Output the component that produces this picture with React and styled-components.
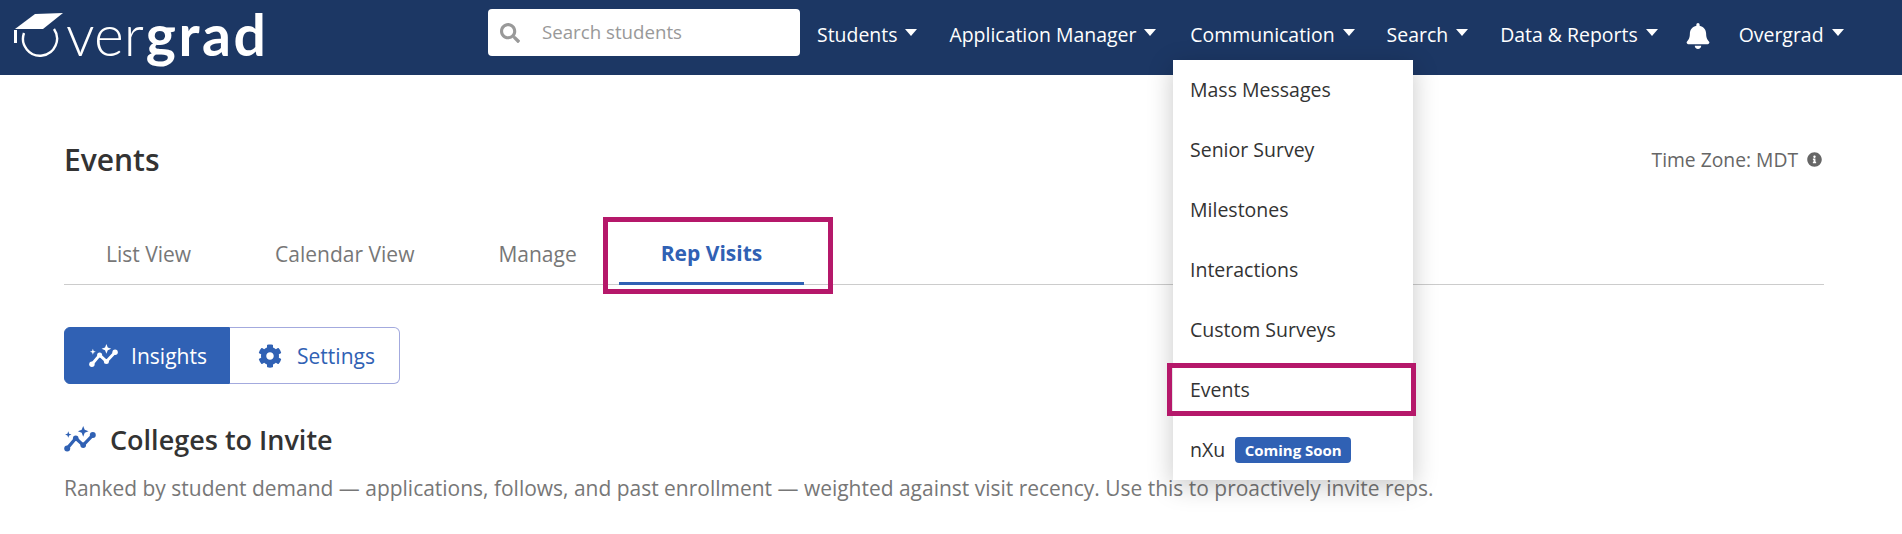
import React from "react";
import styled, { createGlobalStyle } from "styled-components";
import { FaSearch, FaBell, FaCog, FaInfoCircle } from "react-icons/fa";

const Global = createGlobalStyle`
  html, body { margin: 0; padding: 0; background: #fff; overflow: hidden; }
  body { font-family: "Open Sans", "Noto Sans", sans-serif; color: #333; }
  * { box-sizing: border-box; }
`;

const Page = styled.div`
  position: relative;
  width: 1902px;
  height: 534px;
  overflow: hidden;
`;

const NavBar = styled.header`
  height: 75px;
  background: #1c3764;
  display: flex;
  align-items: flex-start;
  padding-left: 14px;
`;

const Logo = styled.div`
  display: flex;
  align-items: flex-start;
  width: 474px;
  height: 75px;
  color: #fff;
`;

const LogoMark = styled.svg`
  width: 52px;
  height: 48px;
  margin-top: 10px;
  flex: none;
`;

const LogoWord = styled.div`
  font-family: "Lato", sans-serif;
  font-size: 57px;
  line-height: 64px;
  margin-top: 2px;
  white-space: nowrap;
  font-weight: 300;
  b { font-weight: 700; letter-spacing: 2.6px; margin-left: 2px; }
`;

const SearchBox = styled.div`
  width: 312px;
  height: 47px;
  margin-top: 9px;
  background: #fff;
  border-radius: 4px;
  display: flex;
  align-items: center;
  padding-left: 12px;
  color: #999;
  flex: none;
`;

const SearchText = styled.span`
  font-size: 18.7px;
  margin-left: 22px;
  margin-top: -2px;
  color: #999;
`;

const NavItems = styled.nav`
  display: flex;
  align-items: center;
  height: 68px;
  margin-left: 17px;
`;

const NavItem = styled.div`
  display: flex;
  align-items: center;
  color: #fff;
  font-size: 19.45px;
  white-space: nowrap;
  margin-right: ${(p) => p.$gap}px;
`;

const Caret = styled.span`
  width: 0;
  height: 0;
  margin-left: 8px;
  margin-top: -3px;
  border-left: 6px solid transparent;
  border-right: 6px solid transparent;
  border-top: 7px solid currentColor;
`;

const BellWrap = styled.div`
  display: flex;
  color: #fff;
  font-size: 26px;
  margin-right: 28px;
  margin-top: 4px;
`;

const Dropdown = styled.div`
  position: absolute;
  left: 1173px;
  top: 60px;
  width: 240px;
  height: 420px;
  background: #fff;
  box-shadow: 0 6px 24px rgba(0, 0, 0, 0.22);
  z-index: 5;
`;

const MenuItem = styled.div`
  position: relative;
  height: 60px;
  display: flex;
  align-items: center;
  padding: 0 0 1px 17px;
  font-size: 19.5px;
  color: #333;
`;

const Highlight = styled.span`
  position: absolute;
  border: 5px solid #b5186a;
  pointer-events: none;
  left: ${(p) => p.$l}px;
  top: ${(p) => p.$t}px;
  width: ${(p) => p.$w}px;
  height: ${(p) => p.$h}px;
`;

const Badge = styled.span`
  background: #3061b4;
  color: #fff;
  font-size: 15px;
  font-weight: 700;
  height: 26px;
  width: 116px;
  border-radius: 4px;
  margin-left: 10px;
  display: flex;
  align-items: center;
  justify-content: center;
`;

const Main = styled.main`
  padding: 0 78px 0 64px;
`;

const TitleRow = styled.div`
  display: flex;
  justify-content: space-between;
  align-items: center;
  height: 60px;
  margin-top: 54px;
`;

const Title = styled.h1`
  margin: 0;
  font-size: 30px;
  font-weight: 600;
  color: #333;
`;

const TimeZone = styled.div`
  display: flex;
  align-items: center;
  font-size: 19.3px;
  color: #666;
  margin-right: 2px;
  svg { font-size: 15px; margin-left: 9px; }
`;

const Tabs = styled.div`
  display: flex;
  margin-top: 28px;
  height: 68px;
  border-bottom: 1px solid #ccc;
`;

const Tab = styled.div`
  position: relative;
  height: 68px;
  padding: 6px 42px 0;
  display: flex;
  align-items: center;
  font-size: 21px;
  white-space: nowrap;
  color: ${(p) => (p.$active ? "#3061b4" : "#777")};
  font-weight: ${(p) => (p.$active ? 700 : 400)};
  border-bottom: ${(p) => (p.$active ? "3.5px solid #3061b4" : "none")};
`;

const ButtonGroup = styled.div`
  display: flex;
  margin-top: 42px;
  height: 57px;
`;

const ToggleButton = styled.div`
  height: 57px;
  width: ${(p) => p.$w}px;
  display: flex;
  align-items: center;
  justify-content: center;
  padding-left: ${(p) => (p.$active ? 2 : 4)}px;
  font-size: 21px;
  gap: ${(p) => (p.$active ? 13 : 15)}px;
  background: ${(p) => (p.$active ? "#3061b4" : "#fff")};
  color: ${(p) => (p.$active ? "#fff" : "#3061b4")};
  border: 1px solid ${(p) => (p.$active ? "#3061b4" : "#a3aade")};
  border-left-width: ${(p) => (p.$active ? 1 : 0)}px;
  border-radius: ${(p) => (p.$active ? "6px 0 0 6px" : "0 6px 6px 0")};
  svg.cog { font-size: 24px; }
`;

const Heading = styled.h2`
  display: flex;
  align-items: center;
  gap: 14px;
  margin: 35px 0 0;
  font-size: 27px;
  font-weight: 600;
  color: #333;
  height: 40px;
`;

const Description = styled.p`
  margin: 16px 0 0;
  font-size: 20.97px;
  line-height: 26px;
  color: #777;
  white-space: nowrap;
`;

const SparkIcon = ({ size = 28, color = "currentColor" }) => (
  <svg width={size} height={(size * 24) / 30} viewBox="0 0 30 24" fill="none">
    <path d="M3 21 L11 11.5 L18 18 L27 8.5" stroke={color} strokeWidth="3" strokeLinejoin="round" />
    <circle cx="3" cy="21" r="2.8" fill={color} />
    <circle cx="11" cy="11.5" r="2.6" fill={color} />
    <circle cx="18" cy="18" r="2.6" fill={color} />
    <circle cx="27" cy="8.5" r="2.8" fill={color} />
    <path d="M18 0 L19.4 3.6 L23 5 L19.4 6.4 L18 10 L16.6 6.4 L13 5 L16.6 3.6 Z" fill={color} />
    <path d="M4 5 L4.8 7.2 L7 8 L4.8 8.8 L4 11 L3.2 8.8 L1 8 L3.2 7.2 Z" fill={color} />
  </svg>
);

const navItems = [
  { label: "Students", gap: 32 },
  { label: "Application Manager", gap: 34 },
  { label: "Communication", gap: 32 },
  { label: "Search", gap: 32 },
  { label: "Data & Reports", gap: 27 },
];

const menu = ["Mass Messages", "Senior Survey", "Milestones", "Interactions", "Custom Surveys"];

export default function App() {
  return (
    <Page>
      <Global />
      <NavBar>
        <Logo>
          <LogoMark viewBox="0 0 52 48">
            <polygon points="1,19 21,4 49,3 29,19" fill="#fff" />
            <rect x="0" y="20" width="3" height="13" fill="#fff" />
            <path d="M10 23 A17 17 0 1 0 40 19" fill="none" stroke="#fff" strokeWidth="2.4" />
          </LogoMark>
          <LogoWord>ver<b>grad</b></LogoWord>
        </Logo>
        <SearchBox>
          <FaSearch size={20} />
          <SearchText>Search students</SearchText>
        </SearchBox>
        <NavItems>
          {navItems.map((n) => (
            <NavItem key={n.label} $gap={n.gap}>
              {n.label}
              <Caret />
            </NavItem>
          ))}
          <BellWrap><FaBell /></BellWrap>
          <NavItem $gap={0}>
            Overgrad
            <Caret />
          </NavItem>
        </NavItems>
      </NavBar>
      <Dropdown>
        {menu.map((m) => (
          <MenuItem key={m}>{m}</MenuItem>
        ))}
        <MenuItem>
          Events
          <Highlight $l={-6} $t={3} $w={249} $h={53} />
        </MenuItem>
        <MenuItem>
          nXu
          <Badge>Coming Soon</Badge>
        </MenuItem>
      </Dropdown>
      <Main>
        <TitleRow>
          <Title>Events</Title>
          <TimeZone>
            Time Zone: MDT
            <FaInfoCircle />
          </TimeZone>
        </TitleRow>
        <Tabs>
          <Tab>List View</Tab>
          <Tab>Calendar View</Tab>
          <Tab>Manage</Tab>
          <Tab $active>
            Rep Visits
            <Highlight $l={-16} $t={0} $w={230} $h={77} />
          </Tab>
        </Tabs>
        <ButtonGroup>
          <ToggleButton $active $w={166}>
            <SparkIcon size={29} />
            Insights
          </ToggleButton>
          <ToggleButton $w={170}>
            <FaCog className="cog" />
            Settings
          </ToggleButton>
        </ButtonGroup>
        <Heading>
          <SparkIcon size={32} color="#3061b4" />
          Colleges to Invite
        </Heading>
        <Description>
          Ranked by student demand — applications, follows, and past enrollment — weighted against visit recency. Use this to proactively invite reps.
        </Description>
      </Main>
    </Page>
  );
}
